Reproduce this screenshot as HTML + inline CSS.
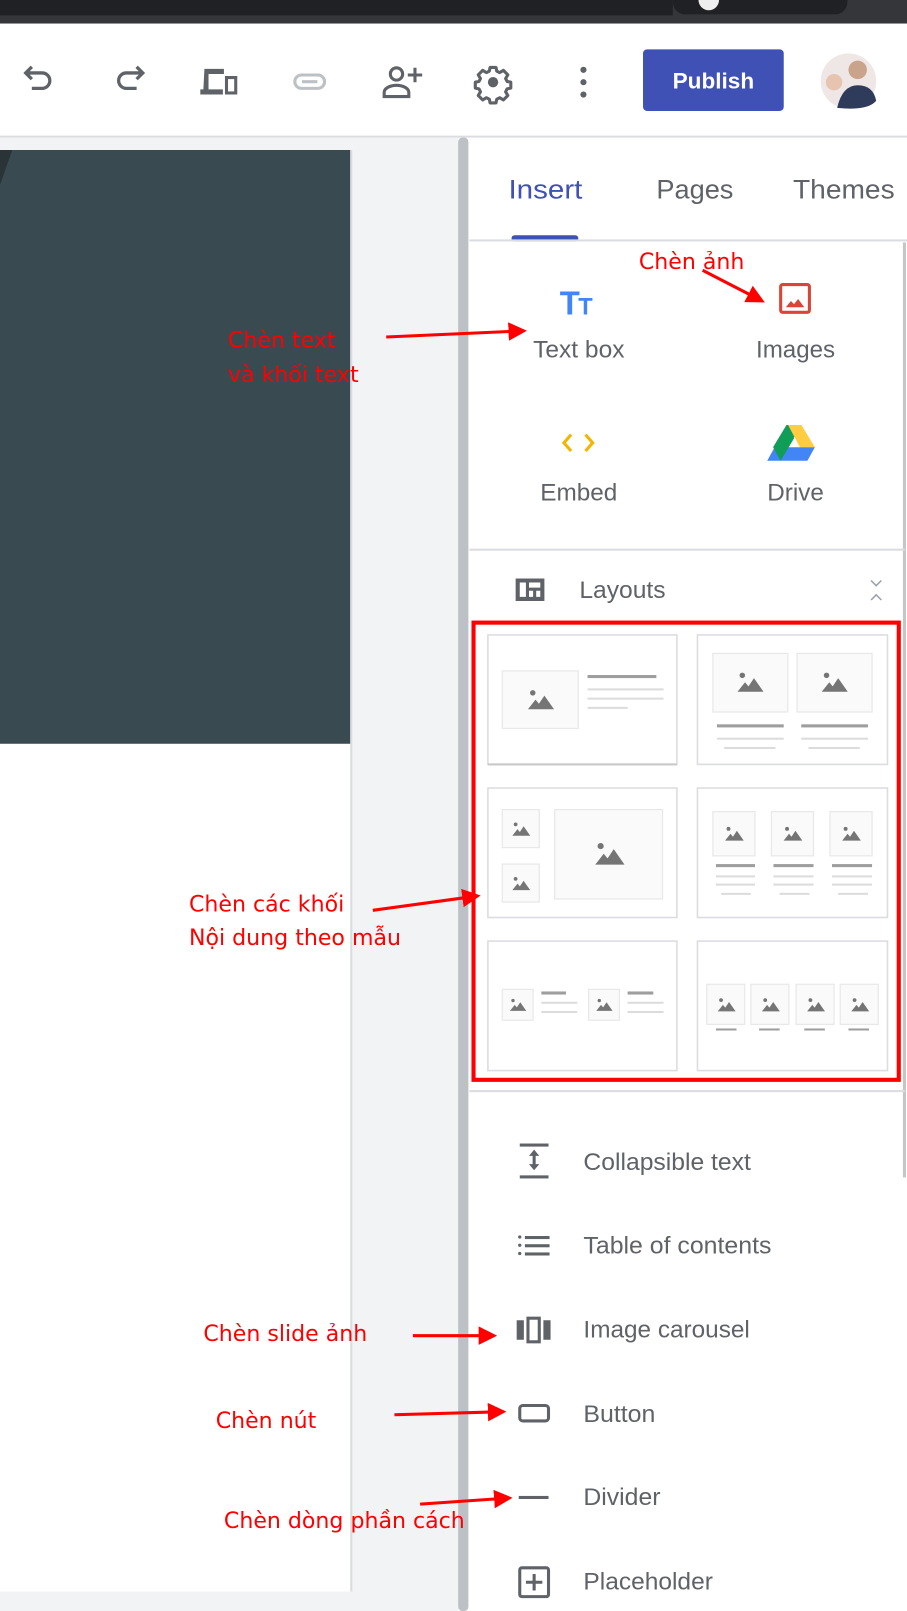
<!DOCTYPE html>
<html><head><meta charset="utf-8"><style>
html,body{margin:0;padding:0;width:907px;height:1611px;overflow:hidden;background:#fff}
svg{display:block}
text{font-family:"Liberation Sans",sans-serif}
.lbl{font-size:23px;fill:#5f6368}
.red{font-family:"DejaVu Sans","Liberation Sans",sans-serif;font-size:21.5px;fill:#f00}
</style></head><body>
<svg width="907" height="1611" viewBox="0 0 883 1568" preserveAspectRatio="none" xmlns="http://www.w3.org/2000/svg">
<defs>
<symbol id="m" viewBox="0 0 24 24"><circle cx="6.5" cy="7" r="2" fill="#757575"/><path d="M3 19 L8.5 12 L11 15 L15 9 L22 19Z" fill="#757575"/></symbol>
<marker id="ah" markerWidth="6" markerHeight="6" refX="5" refY="3" orient="auto"><path d="M0 0 L6 3 L0 6Z" fill="#f00"/></marker>
</defs>
<!-- chrome bar -->
<rect x="0" y="0" width="883" height="23" fill="#35363a"/>
<rect x="0" y="0" width="655" height="15" fill="#202124"/>
<rect x="655" y="-10" width="170" height="24" rx="12" fill="#202124"/>
<circle cx="690" cy="0" r="10" fill="#eee"/>
<!-- toolbar -->
<rect x="0" y="23" width="883" height="110" fill="#fff"/>
<rect x="0" y="132" width="883" height="2" fill="#dadce0"/>
<g fill="none" stroke="#5f6368" stroke-width="3.2">
<path d="M31 77 L25 71 L31 65 M25 71 H41 A7.5 7.5 0 0 1 41 86 H31"/>
<path d="M133 77 L139 71 L133 65 M139 71 H123 A7.5 7.5 0 0 0 123 86 H133"/>
</g>
<path d="M199 67 h19 v5 h-15 v15 h-5z M195 87 h22 v5 h-22z M219 74 h12 v18 h-12z" fill="#5f6368"/>
<rect x="222" y="77" width="6" height="12" fill="#fff"/>
<g fill="none" stroke="#bdc1c6" stroke-width="3"><rect x="287" y="73" width="29" height="13" rx="6.5"/><path d="M294 79.5h15"/></g>
<g fill="none" stroke="#5f6368" stroke-width="3"><circle cx="386" cy="72" r="6"/><path d="M374 94 v-4 a12 7 0 0 1 24 0 v4z"/><path d="M404 66 v14 M397 73 h14"/></g>
<g transform="translate(480,80) scale(0.72)"><path d="M-4 -16h8l1 5 4 2 5-3 6 6-3 5 2 4 5 1v8l-5 1-2 4 3 5-6 6-5-3-4 2-1 5h-8l-1-5-4-2-5 3-6-6 3-5-2-4-5-1v-8l5-1 2-4-3-5 6-6 5 3 4-2z" transform="translate(0,-4)" fill="none" stroke="#5f6368" stroke-width="4.2" stroke-linejoin="round"/><circle r="7" fill="#5f6368"/></g>
<g fill="#5f6368"><circle cx="568" cy="68" r="3"/><circle cx="568" cy="80" r="3"/><circle cx="568" cy="92" r="3"/></g>
<rect x="626" y="48" width="137" height="60" rx="4" fill="#3f51b5"/>
<text x="694.5" y="86" text-anchor="middle" font-size="22" font-weight="bold" fill="#fff">Publish</text>
<circle cx="826" cy="79" r="27" fill="#efe6e6"/>
<circle cx="835" cy="68" r="9" fill="#c9a38a"/><path d="M815 105 q5-22 20-22 q15 0 18 15 q-8 10-38 7z" fill="#2f3b5a"/>
<circle cx="812" cy="80" r="8" fill="#e6c4b0"/>
<!-- left canvas -->
<rect x="0" y="134" width="446" height="1434" fill="#f1f3f4"/>
<rect x="0" y="146" width="341" height="578" fill="#3a4a51"/>
<path d="M0 146 h12 L0 180z" fill="#2a3338"/>
<rect x="0" y="724" width="341" height="825" fill="#fff"/>
<rect x="341" y="146" width="2" height="1403" fill="#dadce0"/>
<rect x="446" y="134" width="10" height="1434" rx="4" fill="#bdc1c6"/>
<!-- right panel -->
<rect x="457" y="134" width="426" height="1434" fill="#fff"/>
<text x="495" y="193" font-size="26" fill="#3f51b5" textLength="72" lengthAdjust="spacingAndGlyphs">Insert</text>
<text x="639" y="193" font-size="26" fill="#5f6368" textLength="75" lengthAdjust="spacingAndGlyphs">Pages</text>
<text x="772" y="193" font-size="26" fill="#5f6368" textLength="99" lengthAdjust="spacingAndGlyphs">Themes</text>
<rect x="498" y="229" width="65" height="6" rx="3" fill="#3f51b5"/>
<rect x="457" y="233" width="426" height="2" fill="#dadce0"/>
<rect x="879" y="236" width="3" height="910" fill="#c6c6c6"/>
<!-- insert grid -->
<text x="545" y="306" font-size="32" font-weight="bold" fill="#4285f4">T</text><text x="563" y="306" font-size="23" font-weight="bold" fill="#4285f4">T</text>
<text x="519" y="348" class="lbl" textLength="89" lengthAdjust="spacingAndGlyphs">Text box</text>
<rect x="760" y="277" width="28" height="27" rx="2" fill="none" stroke="#db4437" stroke-width="3"/>
<path d="M765 299 l5-6 3 3 4-5 6 8z" fill="#db4437"/>
<text x="736" y="348" class="lbl" textLength="77" lengthAdjust="spacingAndGlyphs">Images</text>
<path d="M556 423 l-7 8 7 8 M570 423 l7 8 -7 8" fill="none" stroke="#f4b400" stroke-width="3"/>
<text x="526" y="487" class="lbl" textLength="75" lengthAdjust="spacingAndGlyphs">Embed</text>
<g transform="translate(773,431) scale(1.45) translate(-779,-424)">
<path d="M765 427 l9-15 h10 l-9 15z" fill="#0f9d58"/><path d="M775 412 h9 l9 15 h-10z" fill="#ffcd40"/><path d="M766 427 h27 l-5 9 h-27z" fill="#4285f4"/><path d="M765 427 l9-15 5 9 -9 15z" fill="#0f9d58"/>
</g>
<text x="747" y="487" class="lbl" textLength="55" lengthAdjust="spacingAndGlyphs">Drive</text>
<rect x="457" y="534" width="424" height="2" fill="#dadce0"/>
<path d="M502 563 h28 v22 h-28z M506 567 v14 h6 v-14z M515 567 v5 h11 v-5z M515 575 v6 h4 v-6z M522 575 v6 h4 v-6z" fill="#5f6368" fill-rule="evenodd"/>
<text x="564" y="582" class="lbl" textLength="84" lengthAdjust="spacingAndGlyphs">Layouts</text>
<path d="M848 565 l5 5 5-5 M848 584 l5-5 5 5" fill="none" stroke="#9aa0a6" stroke-width="1.5"/>
<!-- layouts -->
<rect x="461" y="606" width="414" height="445" fill="none" stroke="#f00" stroke-width="4"/>
<g fill="#fff" stroke="#dadce0" stroke-width="1.5">
<rect x="475" y="618" width="184" height="126"/><rect x="679" y="618" width="185" height="126"/>
<rect x="475" y="767" width="184" height="126"/><rect x="679" y="767" width="185" height="126"/>
<rect x="475" y="916" width="184" height="126"/><rect x="679" y="916" width="185" height="126"/>
</g>
<rect x="475" y="743" width="184" height="2" fill="#c8c8c8"/>
<g fill="#fafafa" stroke="#e8e8e8" stroke-width="1.2">
<rect x="489" y="653" width="74" height="56"/>
<rect x="694" y="636" width="73" height="57"/><rect x="776" y="636" width="73" height="57"/>
<rect x="489" y="788" width="36" height="37"/><rect x="489" y="841" width="36" height="37"/><rect x="540" y="788" width="105" height="87"/>
<rect x="694" y="790" width="41" height="43"/><rect x="751" y="790" width="41" height="43"/><rect x="808" y="790" width="41" height="43"/>
<rect x="489" y="963" width="30" height="30"/><rect x="573" y="963" width="30" height="30"/>
<rect x="688" y="958" width="37" height="39"/><rect x="731" y="958" width="37" height="39"/><rect x="775" y="958" width="37" height="39"/><rect x="818" y="958" width="37" height="39"/>
</g>
<use href="#m" x="510" y="665" width="32" height="32"/>
<use href="#m" x="714" y="648" width="32" height="32"/><use href="#m" x="796" y="648" width="32" height="32"/>
<use href="#m" x="496" y="796" width="22" height="22"/><use href="#m" x="496" y="849" width="22" height="22"/><use href="#m" x="575" y="813" width="36" height="36"/>
<use href="#m" x="703" y="800" width="23" height="23"/><use href="#m" x="760" y="800" width="23" height="23"/><use href="#m" x="817" y="800" width="23" height="23"/>
<use href="#m" x="494" y="968" width="20" height="20"/><use href="#m" x="578" y="968" width="20" height="20"/>
<use href="#m" x="696" y="967" width="22" height="22"/><use href="#m" x="739" y="967" width="22" height="22"/><use href="#m" x="783" y="967" width="22" height="22"/><use href="#m" x="826" y="967" width="22" height="22"/>
<g fill="#9e9e9e">
<rect x="572" y="657" width="67" height="3"/>
<rect x="698" y="705" width="65" height="3"/><rect x="780" y="705" width="65" height="3"/>
<rect x="697" y="841" width="38" height="3"/><rect x="753" y="841" width="39" height="3"/><rect x="810" y="841" width="39" height="3"/>
<rect x="527" y="965" width="24" height="3"/><rect x="611" y="965" width="25" height="3"/>
<rect x="697" y="1001" width="20" height="2"/><rect x="739" y="1001" width="20" height="2"/><rect x="783" y="1001" width="20" height="2"/><rect x="826" y="1001" width="20" height="2"/>
</g>
<g fill="#dcdcdc">
<rect x="572" y="670" width="74" height="2"/><rect x="572" y="679" width="74" height="2"/><rect x="572" y="688" width="39" height="2"/>
<rect x="698" y="718" width="65" height="2"/><rect x="705" y="727" width="50" height="2"/><rect x="780" y="718" width="65" height="2"/><rect x="787" y="727" width="50" height="2"/>
<rect x="697" y="852" width="38" height="2"/><rect x="697" y="860" width="38" height="2"/><rect x="702" y="869" width="29" height="2"/>
<rect x="753" y="852" width="39" height="2"/><rect x="753" y="860" width="39" height="2"/><rect x="759" y="869" width="29" height="2"/>
<rect x="810" y="852" width="39" height="2"/><rect x="810" y="860" width="39" height="2"/><rect x="816" y="869" width="29" height="2"/>
<rect x="527" y="975" width="35" height="2"/><rect x="527" y="984" width="35" height="2"/><rect x="611" y="975" width="35" height="2"/><rect x="611" y="984" width="35" height="2"/>
</g>
<rect x="457" y="1061" width="424" height="2" fill="#dadce0"/>
<!-- list -->
<g fill="#5f6368">
<rect x="506" y="1113" width="28" height="3"/><rect x="506" y="1144" width="28" height="3"/><path d="M520 1119 l-5 6 h3.5 v8 h-3.5 l5 6 5-6 h-3.5 v-8 h3.5z"/>
<circle cx="506" cy="1204" r="1.6"/><circle cx="506" cy="1212" r="1.6"/><circle cx="506" cy="1220" r="1.6"/>
<rect x="511" y="1203" width="24" height="3"/><rect x="511" y="1211" width="24" height="3"/><rect x="511" y="1219" width="24" height="3"/>
<rect x="503" y="1285" width="7" height="19"/><rect x="529" y="1285" width="7" height="19"/>
<rect x="505" y="1456" width="29" height="3"/>
</g>
<g fill="none" stroke="#5f6368" stroke-width="3">
<rect x="514" y="1283" width="11" height="23"/>
<rect x="506" y="1368" width="28" height="15" rx="3"/>
<rect x="506" y="1526" width="28" height="28" rx="2"/><path d="M520 1532 v16 M512 1540 h16"/>
</g>
<text x="568" y="1139" class="lbl" textLength="163" lengthAdjust="spacingAndGlyphs">Collapsible text</text>
<text x="568" y="1220" class="lbl" textLength="183" lengthAdjust="spacingAndGlyphs">Table of contents</text>
<text x="568" y="1302" class="lbl" textLength="162" lengthAdjust="spacingAndGlyphs">Image carousel</text>
<text x="568" y="1384" class="lbl" textLength="70" lengthAdjust="spacingAndGlyphs">Button</text>
<text x="568" y="1465" class="lbl" textLength="75" lengthAdjust="spacingAndGlyphs">Divider</text>
<text x="568" y="1547" class="lbl" textLength="126" lengthAdjust="spacingAndGlyphs">Placeholder</text>
<!-- annotations -->
<g stroke="#f00" stroke-width="3" fill="none" marker-end="url(#ah)">
<path d="M684 263 L742 293"/>
<path d="M376 328 L510 322"/>
<path d="M363 886 L465 872"/>
<path d="M402 1300 L481 1300"/>
<path d="M384 1377 L490 1374"/>
<path d="M409 1464 L496 1458"/>
</g>
<text x="622" y="262" class="red">Chèn ảnh</text>
<text x="222" y="338" class="red">Chèn text</text>
<text x="222" y="372" class="red">và khối text</text>
<text x="184" y="887" class="red">Chèn các khối</text>
<text x="184" y="920" class="red">Nội dung theo mẫu</text>
<text x="198" y="1305" class="red">Chèn slide ảnh</text>
<text x="210" y="1390" class="red">Chèn nút</text>
<text x="218" y="1487" class="red">Chèn dòng phần cách</text>
</svg>
</body></html>
